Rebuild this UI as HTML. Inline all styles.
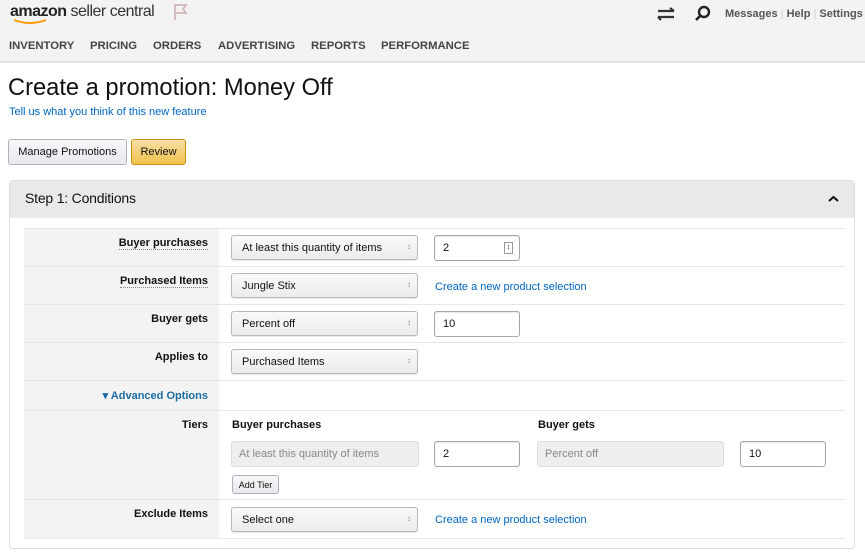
<!DOCTYPE html>
<html><head><meta charset="utf-8"><style>
*{margin:0;padding:0;box-sizing:border-box}
body{width:865px;height:560px;background:#fff;font-family:"Liberation Sans",Arial,sans-serif;position:relative;overflow:hidden;color:#111}
.a{position:absolute}
.top{left:0;top:0;width:865px;height:63px;background:#f3f3f3;border-bottom:2px solid #e3e3e3}
.nav{top:40px;font-size:11.3px;font-weight:bold;color:#444}
.lnk{color:#0066c0}
.btn{border:1px solid #adb1b8;border-radius:3px;font-size:11px;display:flex;align-items:center;justify-content:center;background:linear-gradient(#f7f8fa,#e7e9ec)}
.panel{left:9px;top:180px;width:846px;height:369px;border:1px solid #ddd;border-radius:4px}
.ph{left:10px;top:181px;width:844px;height:37px;background:#e9e9e9}
.lab{left:24px;width:195px;background:#f3f3f3}
.row{left:24px;width:821px;border-top:1px solid #e7e7e7}
.lt{font-size:11px;font-weight:bold;text-align:right;width:184px;left:24px;color:#111}
.u{border-bottom:1px dotted #888}
.sel{width:187px;height:25px;border:1px solid #b9b9b9;border-radius:3px;background:linear-gradient(#f9f9f9,#ececec);font-size:11px;padding:6px 10px;box-shadow:0 1px 1px rgba(0,0,0,.1)}
.sel:after{content:"\2195";position:absolute;right:6px;top:6px;font-size:8px;color:#888}
.inp{width:86px;height:26px;border:1px solid #a6a6a6;border-radius:3px;background:#fff;font-size:11px;padding:6px 8px;box-shadow:inset 0 1px 1px rgba(0,0,0,.1)}
.dis{height:26px;border:1px solid #ddd;border-radius:3px;background:#eee;font-size:11px;color:#888;padding:6px 7px}
</style></head><body>
<div class="a top"></div>
<div class="a" style="left:10px;top:3px;font-size:16px;font-weight:bold;color:#222;letter-spacing:-0.5px">amazon<span style="font-weight:normal;color:#333"> seller central</span></div>
<svg class="a" style="left:12px;top:18px" width="40" height="8"><path d="M2 2 Q18 8 34 2" stroke="#f90" stroke-width="2" fill="none"/></svg>
<svg class="a" style="left:172px;top:3px" width="18" height="18"><path d="M3 17V2h11l-3 4 3 4H3" stroke="#cfb6b6" stroke-width="1.8" fill="none"/></svg>
<svg class="a" style="left:657px;top:7px" width="20" height="14"><path d="M1 4h16M13 1l4 3M1 10h16M4 13l-3-3" stroke="#333" stroke-width="2.2" fill="none"/></svg>
<svg class="a" style="left:694px;top:5px" width="18" height="18"><circle cx="10" cy="7" r="5" stroke="#222" stroke-width="2.4" fill="none"/><path d="M6 11l-4 4" stroke="#222" stroke-width="2.6"/></svg>
<div class="a" style="left:725px;top:8px;font-size:11px;font-weight:bold;color:#555">Messages <span style="color:#ccc;font-weight:normal">|</span> Help <span style="color:#ccc;font-weight:normal">|</span> Settings</div>
<div class="a nav" style="left:9px">INVENTORY</div>
<div class="a nav" style="left:90px">PRICING</div>
<div class="a nav" style="left:153px">ORDERS</div>
<div class="a nav" style="left:218px">ADVERTISING</div>
<div class="a nav" style="left:311px">REPORTS</div>
<div class="a nav" style="left:381px">PERFORMANCE</div>
<div class="a" style="left:8px;top:75px;font-size:23.7px;color:#111">Create a promotion: Money Off</div>
<div class="a lnk" style="left:9px;top:106px;font-size:11px">Tell us what you think of this new feature</div>
<div class="a btn" style="left:8px;top:139px;width:119px;height:26px">Manage Promotions</div>
<div class="a btn" style="left:131px;top:139px;width:55px;height:26px;background:linear-gradient(#f7dfa5,#f0c14b);border-color:#c89411">Review</div>
<div class="a panel"></div>
<div class="a ph"></div>
<div class="a" style="left:25px;top:190px;font-size:14px;color:#111;letter-spacing:-0.2px">Step 1: Conditions</div>
<svg class="a" style="left:828px;top:195px" width="11" height="8"><path d="M1 6l4.5-4 4.5 4" stroke="#111" stroke-width="2" fill="none"/></svg>
<div class="a lab" style="top:228px;height:310px"></div>
<div class="a row" style="top:228px"></div>
<div class="a row" style="top:266px"></div>
<div class="a row" style="top:304px"></div>
<div class="a row" style="top:342px"></div>
<div class="a row" style="top:380px"></div>
<div class="a row" style="top:410px"></div>
<div class="a row" style="top:499px"></div>
<div class="a row" style="top:538px"></div>
<div class="a lt" style="top:237px"><span class="u">Buyer purchases</span></div>
<div class="a sel" style="left:231px;top:235px">At least this quantity of items</div>
<div class="a inp" style="left:434px;top:235px">2<span style="position:absolute;right:6px;top:6px;width:9px;height:12px;border:1px solid #999;font-size:7px;line-height:10px;text-align:center">&#8597;</span></div>
<div class="a lt" style="top:275px"><span class="u">Purchased Items</span></div>
<div class="a sel" style="left:231px;top:273px">Jungle Stix</div>
<div class="a lnk" style="left:435px;top:281px;font-size:11px">Create a new product selection</div>
<div class="a lt" style="top:313px">Buyer gets</div>
<div class="a sel" style="left:231px;top:311px">Percent off</div>
<div class="a inp" style="left:434px;top:311px">10</div>
<div class="a lt" style="top:351px">Applies to</div>
<div class="a sel" style="left:231px;top:349px">Purchased Items</div>
<div class="a lt lnk" style="top:389px;color:#1a6ba0">&#9662; Advanced Options</div>
<div class="a lt" style="top:419px">Tiers</div>
<div class="a" style="left:232px;top:419px;font-size:11px;font-weight:bold">Buyer purchases</div>
<div class="a" style="left:538px;top:419px;font-size:11px;font-weight:bold">Buyer gets</div>
<div class="a dis" style="left:231px;top:441px;width:188px">At least this quantity of items</div>
<div class="a inp" style="left:434px;top:441px">2</div>
<div class="a dis" style="left:537px;top:441px;width:187px">Percent off</div>
<div class="a inp" style="left:740px;top:441px">10</div>
<div class="a btn" style="left:232px;top:475px;width:47px;height:19px;font-size:9px">Add Tier</div>
<div class="a lt" style="top:508px">Exclude Items</div>
<div class="a sel" style="left:231px;top:507px">Select one</div>
<div class="a lnk" style="left:435px;top:514px;font-size:11px">Create a new product selection</div>
</body></html>
